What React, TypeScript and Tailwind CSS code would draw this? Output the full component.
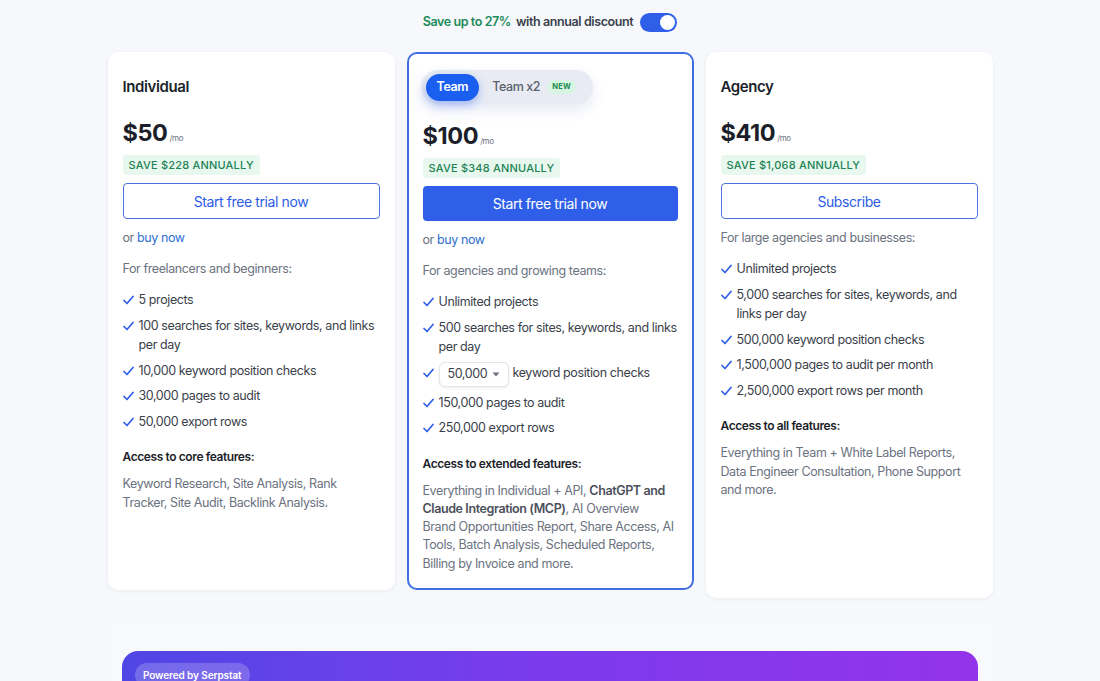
import React from "react";

const Check = () => (
  <svg width="11" height="10" viewBox="0 0 11 10" className="shrink-0 mt-[5px]">
    <path d="M1 5.5 L4 8.5 L10 1.5" fill="none" stroke="#2f5fe8" strokeWidth="1.7" strokeLinecap="round" strokeLinejoin="round" />
  </svg>
);

const Item = ({ children }: { children: React.ReactNode }) => (
  <li className="flex gap-[5px] items-start text-[12.5px] leading-[19.5px] text-[#3a3f4b]">
    <Check />
    <span>{children}</span>
  </li>
);

const Badge = ({ text }: { text: string }) => (
  <div className="flex">
    <div className="bg-[#e9f8ef] text-[#218354] text-[11px] font-medium tracking-[0.2px] px-[6px] h-[20px] flex items-center rounded-[3px]">
      {text}
    </div>
  </div>
);

const Price = ({ v }: { v: string }) => (
  <div className="flex items-end h-[32px]">
    <span className="text-[23.5px] font-bold text-[#1c1f2a] leading-[32px]">{v}</span>
    <span className="text-[8px] text-[#6b7280] ml-[2px] mb-[5px]">/mo</span>
  </div>
);

export default function App() {
  return (
    <div className="min-h-[681px] bg-[#f6f8fb] font-['Inter','Noto_Sans',sans-serif] tracking-[-0.025em] overflow-hidden">
      <div className="flex justify-center items-center gap-[5px] pt-[13px] h-[52px] pb-[20px]">
        <span className="text-[12.5px] font-semibold text-[#1b8a5a]">Save up to 27%</span>
        <span className="text-[12.5px] font-semibold text-[#3a3f4b]">with annual discount</span>
        <div className="w-[37px] h-[19px] rounded-full bg-[#2f5fe8] flex items-center justify-end pr-[2px] ml-[2px]">
          <div className="w-[15px] h-[15px] rounded-full bg-white" />
        </div>
      </div>

      <div className="flex justify-center items-start gap-[12px]">
        {/* Individual */}
        <div className="w-[287px] h-[538px] bg-white rounded-[10px] shadow-[0_1px_4px_rgba(20,30,60,0.06)] px-[15px] pt-[24px] flex flex-col">
          <div className="text-[15px] font-semibold text-[#1c1f2a] leading-[22px] h-[22px]">Individual</div>
          <div className="mt-[19px]"><Price v="$50" /></div>
          <div className="mt-[6px]"><Badge text="SAVE $228 ANNUALLY" /></div>
          <button className="mt-[8px] h-[36px] border border-[#4a73e0] rounded-[4px] text-[#2b5ce6] text-[14px]">Start free trial now</button>
          <div className="mt-[10px] text-[12.5px] leading-[18px] text-[#6b7280]">or <span className="text-[#2f6fd0]">buy now</span></div>
          <div className="mt-[13px] text-[12.5px] leading-[18px] text-[#6b7280]">For freelancers and beginners:</div>
          <ul className="mt-[12px] flex flex-col gap-[6px]">
            <Item>5 projects</Item>
            <Item>100 searches for sites, keywords, and links per day</Item>
            <Item>10,000 keyword position checks</Item>
            <Item>30,000 pages to audit</Item>
            <Item>50,000 export rows</Item>
          </ul>
          <div className="mt-[17px] text-[12px] font-semibold text-[#1c1f2a] leading-[18px]">Access to core features:</div>
          <div className="mt-[9px] text-[12.5px] leading-[18.5px] text-[#6b7280]">Keyword Research, Site Analysis, Rank Tracker, Site Audit, Backlink Analysis.</div>
        </div>

        {/* Team */}
        <div className="w-[287px] h-[538px] bg-white rounded-[10px] border-2 border-[#3f6fe2] px-[14px] pt-[16px] flex flex-col">
          <div className="self-start flex items-center h-[34px] bg-[#e8ebf3] rounded-full pl-[5px] pr-[17px] ml-[-2px] shadow-[0_6px_14px_rgba(60,80,180,0.12)]">
            <div className="h-[27px] px-[11px] rounded-full bg-[#1a5ff0] text-white text-[12.5px] font-semibold flex items-center shadow-[0_4px_10px_rgba(30,90,240,0.35)]">Team</div>
            <span className="ml-[13px] text-[12.5px] font-medium text-[#5b606b]">Team x2</span>
            <span className="ml-[7px] bg-[#d7f5e2] text-[#1b8a4f] text-[7.5px] font-bold tracking-[0.3px] rounded-full px-[5px] h-[14px] flex items-center">NEW</span>
          </div>
          <div className="mt-[16px]"><Price v="$100" /></div>
          <div className="mt-[6px]"><Badge text="SAVE $348 ANNUALLY" /></div>
          <button className="mt-[8px] h-[35px] bg-[#2f5fe8] rounded-[4px] text-white text-[14px]">Start free trial now</button>
          <div className="mt-[10px] text-[12.5px] leading-[18px] text-[#6b7280]">or <span className="text-[#2f6fd0]">buy now</span></div>
          <div className="mt-[13px] text-[12.5px] leading-[18px] text-[#6b7280]">For agencies and growing teams:</div>
          <ul className="mt-[12px] flex flex-col gap-[6px]">
            <Item>Unlimited projects</Item>
            <Item>500 searches for sites, keywords, and links per day</Item>
            <li className="flex gap-[5px] items-start text-[12.5px] leading-[19.5px] text-[#3a3f4b]">
              <Check />
              <div className="flex items-start">
                <div className="mt-[-1px] h-[25px] w-[70px] border border-[#e3e5ea] rounded-[6px] shadow-[0_1px_3px_rgba(0,0,0,0.08)] flex items-center justify-between pl-[8px] pr-[8px] bg-white">
                  <span>50,000</span>
                  <svg width="8" height="5" viewBox="0 0 8 5"><path d="M0.5 0.5 L4 4.5 L7.5 0.5 Z" fill="#6b7280" /></svg>
                </div>
                <span className="ml-[4px]">keyword position checks</span>
              </div>
            </li>
            <Item>150,000 pages to audit</Item>
            <Item>250,000 export rows</Item>
          </ul>
          <div className="mt-[17px] text-[12px] font-semibold text-[#1c1f2a] leading-[18px]">Access to extended features:</div>
          <div className="mt-[9px] text-[12.5px] leading-[18.3px] text-[#6b7280]">
            Everything in Individual + API, <b className="font-semibold text-[#4b505b]">ChatGPT and Claude Integration (MCP)</b>, AI Overview<br />Brand Opportunities Report, Share Access, AI Tools, Batch Analysis, Scheduled Reports, Billing by Invoice and more.
          </div>
        </div>

        {/* Agency */}
        <div className="w-[287px] h-[546px] bg-white rounded-[10px] shadow-[0_1px_4px_rgba(20,30,60,0.06)] px-[15px] pt-[24px] flex flex-col">
          <div className="text-[15px] font-semibold text-[#1c1f2a] leading-[22px] h-[22px]">Agency</div>
          <div className="mt-[19px]"><Price v="$410" /></div>
          <div className="mt-[6px]"><Badge text="SAVE $1,068 ANNUALLY" /></div>
          <button className="mt-[8px] h-[36px] border border-[#4a73e0] rounded-[4px] text-[#2b5ce6] text-[14px]">Subscribe</button>
          <div className="mt-[10px] text-[12.5px] leading-[18px] text-[#6b7280]">For large agencies and businesses:</div>
          <ul className="mt-[12px] flex flex-col gap-[6px]">
            <Item>Unlimited projects</Item>
            <Item>5,000 searches for sites, keywords, and links per day</Item>
            <Item>500,000 keyword position checks</Item>
            <Item>1,500,000 pages to audit per month</Item>
            <Item>2,500,000 export rows per month</Item>
          </ul>
          <div className="mt-[17px] text-[12px] font-semibold text-[#1c1f2a] leading-[18px]">Access to all features:</div>
          <div className="mt-[9px] text-[12.5px] leading-[18.5px] text-[#6b7280]">Everything in Team + White Label Reports, Data Engineer Consultation, Phone Support and more.</div>
        </div>
      </div>

      <div className="mt-[27px] mx-auto w-[886px] bg-[#f8f9fc] pt-[26px] px-[15px]">
        <div className="h-[40px] rounded-t-[16px] bg-gradient-to-r from-[#4f46e5] via-[#7c3aed] to-[#9333ea] pt-[12px] pl-[13px] flex items-start">
          <span className="flex items-center h-[24px] px-[8px] rounded-full bg-white/20 text-white text-[10px] font-semibold tracking-[-0.01em]">Powered by Serpstat</span>
        </div>
      </div>
    </div>
  );
}
